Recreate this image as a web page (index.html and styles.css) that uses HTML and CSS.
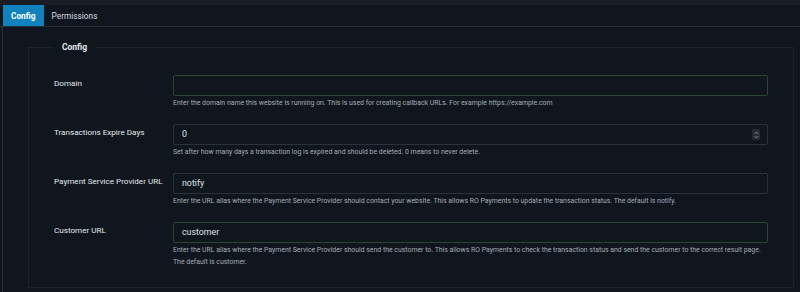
FILE: index.html
```html
<!DOCTYPE html>
<html>
<head>
<meta charset="utf-8">
<link rel="stylesheet" href="styles.css">
</head>
<body>
<div class="topstrip"></div>
<div class="tabs">
  <div class="tab active">Config</div>
  <div class="tab">Permissions</div>
</div>
<div class="panel">
  <fieldset class="box">
    <legend>Config</legend>
    <div class="row">
      <label class="label">Domain</label>
      <div class="control">
        <div class="input valid"></div>
        <div class="help">Enter the domain name this website is running on. This is used for creating callback URLs. For example https://example.com</div>
      </div>
    </div>
    <div class="row">
      <label class="label">Transactions Expire Days</label>
      <div class="control">
        <div class="input">0
          <span class="spin"><svg width="7" height="10" viewBox="0 0 7 10"><path d="M1.5 4 L3.5 2 L5.5 4 M1.5 6 L3.5 8 L5.5 6" fill="none" stroke="#9aa2ac" stroke-width="0.8"/></svg></span>
        </div>
        <div class="help">Set after how many days a transaction log is expired and should be deleted. 0 means to never delete.</div>
      </div>
    </div>
    <div class="row">
      <label class="label">Payment Service Provider URL</label>
      <div class="control">
        <div class="input">notify</div>
        <div class="help">Enter the URL alias where the Payment Service Provider should contact your website. This allows RO Payments to update the transaction status. The default is notify.</div>
      </div>
    </div>
    <div class="row last">
      <label class="label">Customer URL</label>
      <div class="control">
        <div class="input valid">customer</div>
        <div class="help">Enter the URL alias where the Payment Service Provider should send the customer to. This allows RO Payments to check the transaction status and send the customer to the correct result page. The default is customer.</div>
      </div>
    </div>
  </fieldset>
</div>
</body>
</html>
```
FILE: styles.css
```css
html, body {
  margin: 0;
  padding: 0;
  background: #10161e;
  font-family: Roboto, "Liberation Sans", sans-serif;
  color: #dfe3e8;
  overflow: hidden;
}
.topstrip {
  height: 5px;
  background: #181d25;
}
.tabs {
  display: flex;
  padding-left: 3px;
  height: 21px;
  border-bottom: 1px solid #262d36;
}
.tab {
  display: flex;
  align-items: center;
  padding: 0 8px;
  font-size: 8.3px;
  color: #d6dbe0;
}
.tab.active {
  background: #1182bd;
  color: #ffffff;
  font-weight: bold;
}
.panel {
  margin-left: 2px;
  border-left: 1px solid #262d36;
  padding: 14px 6px 10px 25px;
}
.box {
  margin: 0;
  border: 1px solid #1b222a;
  padding: 22px 25px 19px 25px;
  min-width: 0;
}
.box legend {
  margin-left: -1px;
  padding: 0 9px;
  font-size: 8.5px;
  font-weight: bold;
  color: #e6e9ec;
  line-height: 12px;
}
.row {
  display: flex;
  margin-bottom: 15px;
}
.row.last {
  margin-bottom: 0;
}
.label {
  width: 119px;
  flex: none;
  font-size: 8.1px;
  padding-top: 3px;
  color: #e3e7eb;
}
.control {
  flex: 1;
  min-width: 0;
}
.input {
  position: relative;
  height: 19px;
  border: 1px solid #2c323a;
  border-radius: 2px;
  padding-left: 8px;
  font-size: 8.8px;
  line-height: 19px;
  color: #dfe3e8;
}
.input.valid {
  border-color: #2a4533;
}
.spin {
  position: absolute;
  right: 7px;
  top: 4px;
  width: 8px;
  height: 11px;
  background: #262b33;
  border-radius: 1px;
  display: flex;
  align-items: center;
  justify-content: center;
}
.help {
  font-size: 6.9px;
  line-height: 12px;
  margin-top: 1px;
  color: #a3abb4;
}
```
